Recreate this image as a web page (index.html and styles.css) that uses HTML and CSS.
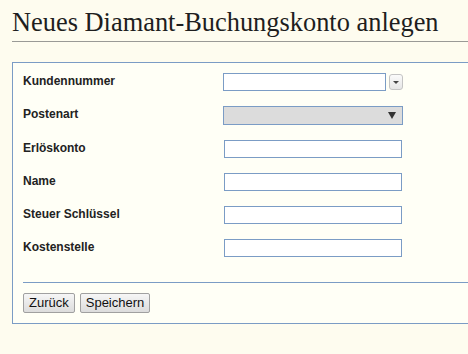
FILE: index.html
```html
<!DOCTYPE html>
<html lang="de">
<head>
<meta charset="utf-8">
<title>Neues Diamant-Buchungskonto anlegen</title>
<link rel="stylesheet" href="styles.css">
</head>
<body>
<h1 class="title">Neues Diamant-Buchungskonto anlegen</h1>
<form class="box">
  <div class="row">
    <label class="label">Kundennummer</label>
    <div class="field">
      <input class="input input-combo" type="text">
      <span class="combo-btn"><span class="tri-small"></span></span>
    </div>
  </div>
  <div class="row row-tall">
    <label class="label">Postenart</label>
    <div class="field">
      <div class="select"><span class="tri"></span></div>
    </div>
  </div>
  <div class="row">
    <label class="label">Erlöskonto</label>
    <div class="field"><input class="input input-wide" type="text"></div>
  </div>
  <div class="row">
    <label class="label">Name</label>
    <div class="field"><input class="input input-wide" type="text"></div>
  </div>
  <div class="row">
    <label class="label">Steuer Schlüssel</label>
    <div class="field"><input class="input input-wide" type="text"></div>
  </div>
  <div class="row">
    <label class="label">Kostenstelle</label>
    <div class="field"><input class="input input-wide" type="text"></div>
  </div>
  <div class="sep"></div>
  <div class="actions">
    <button type="button" class="btn">Zurück</button>
    <button type="button" class="btn">Speichern</button>
  </div>
</form>
</body>
</html>
```
FILE: styles.css
```css
html, body {
  margin: 0;
  padding: 0;
  background: #fefcef;
  overflow: hidden;
}
body {
  padding-left: 12px;
  font-family: "Liberation Sans", Arial, sans-serif;
  color: #222;
}
.title {
  margin: 0;
  padding-top: 4px;
  font-family: "Liberation Serif", "Times New Roman", serif;
  font-weight: normal;
  font-size: 26.4px;
  line-height: 37px;
  color: #1e1e1e;
  border-bottom: 1px solid #9a9a96;
  white-space: nowrap;
}
.box {
  margin: 20px 0 0 0;
  border: 1px solid #7b9cc5;
  border-right: none;
  background: #fffff6;
  padding: 10px 0 10px 10px;
}
.row {
  display: grid;
  grid-template-columns: 200px 1fr;
  height: 33px;
  align-items: start;
}
.row-tall {
  height: 34px;
}
.label {
  font-weight: bold;
  font-size: 12px;
  line-height: 16px;
  color: #222;
}
.field {
  display: flex;
  align-items: flex-start;
}
.input {
  box-sizing: border-box;
  height: 18px;
  margin: 0;
  padding: 0 2px;
  border: 1px solid #7b9cc5;
  background: #fff;
  font: 12px "Liberation Sans", Arial, sans-serif;
  outline: none;
}
.input-combo {
  width: 163px;
}
.input-wide {
  width: 178px;
  margin-left: 1px;
}
.combo-btn {
  box-sizing: border-box;
  width: 14px;
  height: 16px;
  margin: 1px 0 0 3px;
  border: 1px solid #c4c4c4;
  border-radius: 3px;
  background: linear-gradient(#fbfbfb, #e6e6e6);
  display: flex;
  align-items: center;
  justify-content: center;
}
.tri-small {
  width: 0;
  height: 0;
  border-left: 3px solid transparent;
  border-right: 3px solid transparent;
  border-top: 3px solid #444;
  margin-top: 1px;
}
.select {
  box-sizing: border-box;
  width: 180px;
  height: 19px;
  border: 1px solid #7b9cc5;
  background: #dcdcdc;
  display: flex;
  align-items: center;
  justify-content: flex-end;
  padding-right: 6px;
}
.tri {
  width: 0;
  height: 0;
  border-left: 4px solid transparent;
  border-right: 4px solid transparent;
  border-top: 7px solid #333;
}
.sep {
  margin-top: 10px;
  border-top: 1px solid #7b9cc5;
}
.actions {
  display: flex;
  gap: 5px;
  margin-top: 10px;
}
.btn {
  box-sizing: border-box;
  height: 20px;
  margin: 0;
  padding: 0 5px;
  border: 1px solid #a0a0a0;
  border-radius: 2px;
  background: linear-gradient(#f6f6f6, #dcdcdc);
  font: 13px "Liberation Sans", Arial, sans-serif;
  color: #111;
  line-height: 18px;
}
```
